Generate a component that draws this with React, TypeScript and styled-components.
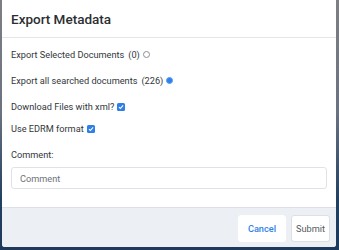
import React from 'react';
import styled, { createGlobalStyle } from 'styled-components';

const GlobalStyle = createGlobalStyle`
  html, body {
    margin: 0;
    padding: 0;
    height: 250px;
    overflow: hidden;
    background: linear-gradient(180deg, #7d7f82 0%, #6b7280 45%, #22405f 80%, #1d3a5c 100%);
    font-family: Roboto, "Liberation Sans", Arial, sans-serif;
  }
`;

const Overlay = styled.div`
  padding: 0 3px 3px 2px;
  height: 250px;
  box-sizing: border-box;
`;

const Modal = styled.div`
  background: #fff;
  height: 247px;
  display: flex;
  flex-direction: column;
  border-radius: 0 0 3px 3px;
  overflow: hidden;
`;

const Header = styled.div`
  height: 38px;
  box-sizing: border-box;
  display: flex;
  align-items: center;
  padding: 0 9px;
  border-bottom: 1px solid #e3e6ea;
`;

const Title = styled.h2`
  margin: 0;
  font-size: 13.5px;
  font-weight: 500;
  color: #2b2f33;
`;

const Body = styled.div`
  flex: 1;
  padding: 10px 9px 0;
  display: flex;
  flex-direction: column;
`;

const Row = styled.label<{ $gap?: number }>`
  display: flex;
  align-items: center;
  font-size: 9.2px;
  color: #33373b;
  height: 13px;
  margin-bottom: ${(p) => p.$gap ?? 13}px;
`;

const Count = styled.span`
  margin-left: 4px;
`;

const Radio = styled.span<{ $on?: boolean }>`
  width: 7px;
  height: 7px;
  border-radius: 50%;
  margin-left: 3px;
  box-sizing: border-box;
  border: ${(p) => (p.$on ? '1.5px solid #5b9bf0' : '1px solid #8a8e93')};
  background: ${(p) => (p.$on ? '#2f80ed' : '#fff')};
`;

const Check = styled.span`
  width: 8px;
  height: 8px;
  margin-left: 3px;
  border-radius: 1.5px;
  background: #2f7fe6;
  display: inline-flex;
  align-items: center;
  justify-content: center;
`;

const Label = styled.div`
  font-size: 9.2px;
  color: #33373b;
  margin-bottom: 7px;
`;

const Input = styled.input`
  height: 22px;
  box-sizing: border-box;
  border: 1px solid #dfe2e6;
  border-radius: 3px;
  padding: 0 8px;
  font-family: inherit;
  font-size: 9.2px;
  color: #33373b;
  &::placeholder {
    color: #6e7379;
  }
`;

const Footer = styled.div`
  height: 40px;
  background: #eceff3;
  border-top: 1px solid #dde1e6;
  display: flex;
  justify-content: flex-end;
  align-items: center;
  gap: 5px;
  padding: 2px 6px 0 0;
  box-sizing: border-box;
`;

const Button = styled.button<{ $primary?: boolean }>`
  height: 27px;
  padding: 0 ${(p) => (p.$primary ? 9 : 4)}px;
  font-family: inherit;
  font-size: 9.2px;
  background: #fff;
  border-radius: 3px;
  border: ${(p) => (p.$primary ? '1px solid #fff' : '1px solid #dcdfe3')};
  color: ${(p) => (p.$primary ? '#2f7fe6' : '#555a60')};
  font-weight: ${(p) => (p.$primary ? 500 : 400)};
  min-width: ${(p) => (p.$primary ? 45 : 38)}px;
`;

function Tick() {
  return (
    <svg width="6" height="6" viewBox="0 0 8 8">
      <path d="M1.3 4.2 L3.2 6 L6.8 1.8" fill="none" stroke="#fff" strokeWidth="1.5" />
    </svg>
  );
}

export default function App() {
  return (
    <>
      <GlobalStyle />
      <Overlay>
        <Modal>
          <Header>
            <Title>Export Metadata</Title>
          </Header>
          <Body>
            <Row>
              Export Selected Documents <Count>(0)</Count>
              <Radio />
            </Row>
            <Row>
              Export all searched documents <Count>(226)</Count>
              <Radio $on />
            </Row>
            <Row $gap={9}>
              Download Files with xml?
              <Check>
                <Tick />
              </Check>
            </Row>
            <Row $gap={14}>
              Use EDRM format
              <Check>
                <Tick />
              </Check>
            </Row>
            <Label>Comment:</Label>
            <Input placeholder="Comment" />
          </Body>
          <Footer>
            <Button $primary>Cancel</Button>
            <Button>Submit</Button>
          </Footer>
        </Modal>
      </Overlay>
    </>
  );
}
